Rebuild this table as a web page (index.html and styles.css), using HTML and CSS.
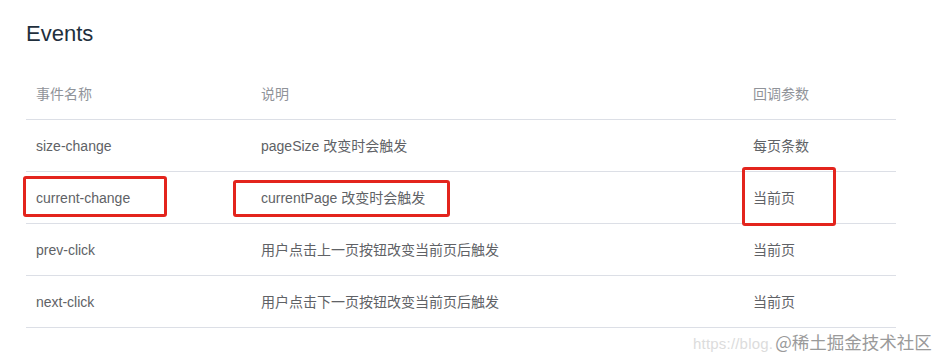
FILE: index.html
```html
<!DOCTYPE html>
<html lang="zh-CN">
<head>
<meta charset="utf-8">
<title>Events</title>
<link rel="stylesheet" href="styles.css">
</head>
<body>
<div class="page">
  <h3 class="title">Events</h3>
  <table class="events">
    <colgroup>
      <col class="c1"><col class="c2"><col class="c3">
    </colgroup>
    <thead>
      <tr><th>事件名称</th><th>说明</th><th>回调参数</th></tr>
    </thead>
    <tbody>
      <tr><td>size-change</td><td>pageSize 改变时会触发</td><td>每页条数</td></tr>
      <tr><td>current-change</td><td>currentPage 改变时会触发</td><td>当前页</td></tr>
      <tr><td>prev-click</td><td>用户点击上一页按钮改变当前页后触发</td><td>当前页</td></tr>
      <tr><td>next-click</td><td>用户点击下一页按钮改变当前页后触发</td><td>当前页</td></tr>
    </tbody>
  </table>
  <div class="mark mark-1"></div>
  <div class="mark mark-2"></div>
  <div class="mark mark-3"></div>
  <div class="watermark"><span class="wm-url">https://blog.</span><span class="wm-site">@稀土掘金技术社区</span></div>
</div>
</body>
</html>
```

FILE: styles.css
```css
html, body {
  margin: 0;
  padding: 0;
  background: #ffffff;
}
body {
  width: 940px;
  height: 360px;
  overflow: hidden;
  font-family: "Liberation Sans", "Noto Sans CJK SC", sans-serif;
}
.page {
  position: relative;
  width: 940px;
  height: 360px;
  padding: 19px 44px 0 26px;
  box-sizing: border-box;
}
.title {
  margin: 0 0 19px 0;
  font-size: 22px;
  line-height: 30px;
  font-weight: 400;
  color: #1f2f3d;
}
.events {
  width: 870px;
  border-collapse: collapse;
  table-layout: fixed;
  font-size: 14px;
}
.c1 { width: 225px; }
.c2 { width: 492px; }
.c3 { width: 153px; }
.events th,
.events td {
  height: 51px;
  padding: 0 10px;
  text-align: left;
  border-bottom: 1px solid #dcdfe6;
  vertical-align: middle;
  line-height: 20px;
}
.events th {
  font-weight: 400;
  color: #909399;
}
.events td {
  color: #606266;
}
.mark {
  position: absolute;
  border: 3px solid #e3241d;
  border-radius: 3px;
  box-sizing: border-box;
}
.mark-1 { left: 23px; top: 176px; width: 144px; height: 41px; }
.mark-2 { left: 233px; top: 180px; width: 217px; height: 37px; }
.mark-3 { left: 742px; top: 167px; width: 94px; height: 59px; }
.watermark {
  position: absolute;
  left: 693px;
  top: 330px;
  display: flex;
  align-items: baseline;
  gap: 2px;
  white-space: nowrap;
  line-height: 24px;
}
.wm-url {
  font-size: 15px;
  color: #dcdcdc;
  letter-spacing: 0.2px;
}
.wm-site {
  font-size: 17.5px;
  color: #9a9a9a;
  text-shadow: 0 0 1px #ffffff, 1px 0 0 #ffffff, -1px 0 0 #ffffff, 0 1px 0 #ffffff, 0 -1px 0 #ffffff;
  font-family: "Noto Sans CJK SC", sans-serif;
}
```
